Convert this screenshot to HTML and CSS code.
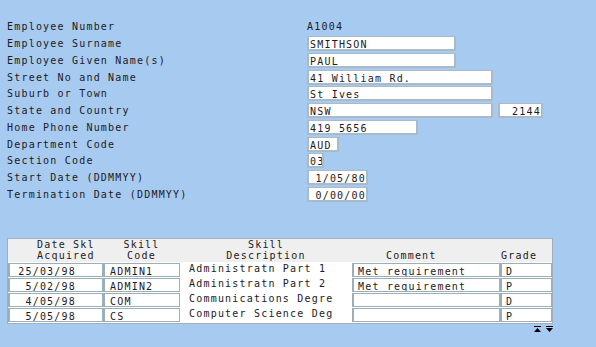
FILE: index.html
```html
<!DOCTYPE html>
<html lang="en">

<head>
    <meta charset="UTF-8">
    <title>Employee Details</title>
    <link rel="stylesheet" href="styles.css">
</head>

<body>
    <div class="employee-form">
        <div class="form-row"><span class="label">Employee Number</span><span class="plain">A1004</span></div>
        <div class="form-row"><span class="label">Employee Surname</span><span class="field w-name">SMITHSON</span></div>
        <div class="form-row"><span class="label">Employee Given Name(s)</span><span class="field w-name">PAUL</span></div>
        <div class="form-row"><span class="label">Street No and Name</span><span class="field w-addr">41 William Rd.</span></div>
        <div class="form-row"><span class="label">Suburb or Town</span><span class="field w-addr">St Ives</span></div>
        <div class="form-row">
            <span class="label">State and Country</span>
            <div class="field-group">
                <span class="field w-addr">NSW</span>
                <span class="field w-post num">2144</span>
            </div>
        </div>
        <div class="form-row"><span class="label">Home Phone Number</span><span class="field w-phone">419 5656</span></div>
        <div class="form-row"><span class="label">Department Code</span><span class="field w-dept">AUD</span></div>
        <div class="form-row"><span class="label">Section Code</span><span class="field w-sect">03</span></div>
        <div class="form-row"><span class="label">Start Date (DDMMYY)</span><span class="field w-date num">1/05/80</span></div>
        <div class="form-row"><span class="label">Termination Date (DDMMYY)</span><span class="field w-date num">0/00/00</span></div>
    </div>

    <div class="skills-table">
        <div class="skills-head">
            <div class="col-date">Date Skl<br>Acquired</div>
            <div class="col-code">Skill<br>Code</div>
            <div class="col-desc">Skill<br>Description</div>
            <div class="col-comment">&nbsp;<br>Comment</div>
            <div class="col-grade">&nbsp;<br>Grade</div>
        </div>
        <div class="skills-body">
            <div class="skill-row">
                <div class="cell cell-date">25/03/98</div>
                <div class="cell cell-code">ADMIN1</div>
                <div class="desc">Administratn Part 1</div>
                <div class="cell cell-comment">Met requirement</div>
                <div class="cell cell-grade">D</div>
            </div>
            <div class="skill-row">
                <div class="cell cell-date">5/02/98</div>
                <div class="cell cell-code">ADMIN2</div>
                <div class="desc">Administratn Part 2</div>
                <div class="cell cell-comment">Met requirement</div>
                <div class="cell cell-grade">P</div>
            </div>
            <div class="skill-row">
                <div class="cell cell-date">4/05/98</div>
                <div class="cell cell-code">COM</div>
                <div class="desc">Communications Degre</div>
                <div class="cell cell-comment"></div>
                <div class="cell cell-grade">D</div>
            </div>
            <div class="skill-row">
                <div class="cell cell-date">5/05/98</div>
                <div class="cell cell-code">CS</div>
                <div class="desc">Computer Science Deg</div>
                <div class="cell cell-comment"></div>
                <div class="cell cell-grade">P</div>
            </div>
        </div>
    </div>

    <div class="scroll-buttons">
        <svg class="scroll-icon" width="7" height="6" viewBox="0 0 7 6">
            <rect x="0" y="0" width="7" height="1" fill="#000"/>
            <polygon points="0,6 7,6 3.5,2" fill="#000"/>
        </svg>
        <svg class="scroll-icon" width="7" height="6" viewBox="0 0 7 6">
            <rect x="0" y="0" width="7" height="1" fill="#000"/>
            <polygon points="0,2 7,2 3.5,6" fill="#000"/>
        </svg>
    </div>
</body>

</html>
```

FILE: styles.css
```css
* {
    margin: 0;
    padding: 0;
    box-sizing: border-box;
}

body {
    background: #a6caf0;
    font-family: 'DejaVu Sans Mono', monospace;
    font-size: 10px;
    letter-spacing: 1.2px;
    color: #1e1a22;
}

/* top form */

.employee-form {
    padding: 19.4px 0 0 7px;
}

.form-row {
    display: grid;
    grid-template-columns: 300px auto;
    height: 16.75px;
}

.label,
.plain {
    line-height: 15px;
    white-space: nowrap;
}

.field-group {
    display: flex;
    gap: 5px;
}

.field {
    display: block;
    height: 15px;
    background: #fff;
    border: 2px solid #a9bac8;
    border-top-width: 1px;
    padding: 2px 1px 0;
    line-height: 11px;
    white-space: nowrap;
    overflow: hidden;
}

.field.num {
    text-align: right;
    padding-right: 0;
    letter-spacing: 1.2px;
}

.w-name { width: 149px; }
.w-addr { width: 186px; }
.w-post { width: 45px; }
.w-phone { width: 111px; }
.w-dept { width: 32px; }
.w-sect { width: 17px; }
.w-date { width: 61px; }

/* skills table */

.skills-table {
    margin: 34.35px 0 0 7px;
    width: 546px;
    border: 1px solid #a2b0ba;
    background: #fff;
}

.skills-head,
.skill-row {
    display: grid;
    grid-template-columns: 95px 77px 172px 148px 52px;
}

.skills-head {
    height: 23px;
    background: #efefef;
    line-height: 11px;
    white-space: nowrap;
}

.col-date {
    padding-left: 29px;
}

.col-code,
.col-desc {
    text-align: center;
}

.col-comment {
    padding-left: 34px;
}

.col-grade {
    padding-left: 1px;
}

.skills-body {
    padding-top: 1px;
}

.skill-row {
    height: 15px;
}

.cell {
    height: 14px;
    border: 1px solid #9caeb8;
    border-left-width: 2px;
    padding-top: 2px;
    line-height: 11px;
    white-space: nowrap;
    overflow: hidden;
}

.cell-date {
    text-align: right;
    padding-right: 26px;
}

.cell-code {
    padding-left: 5px;
}

.desc {
    padding-left: 9px;
    line-height: 11px;
    white-space: nowrap;
    overflow: hidden;
}

.cell-comment,
.cell-grade {
    padding-left: 4px;
}

.scroll-buttons {
    display: flex;
    justify-content: flex-end;
    gap: 5px;
    width: 553px;
    margin-top: 2px;
}

.scroll-icon {
    display: block;
}
```
